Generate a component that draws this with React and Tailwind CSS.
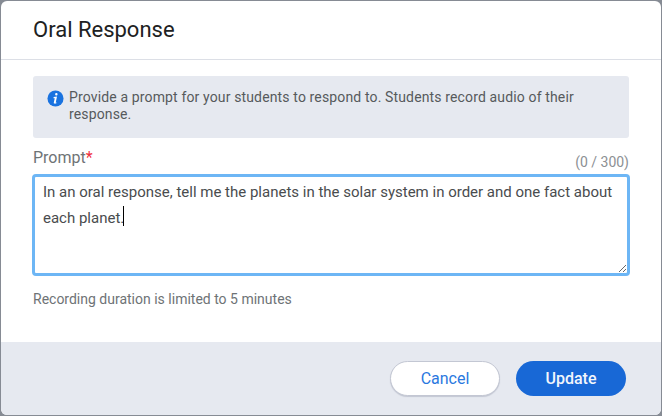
export default function App() {
  return (
    <div className="w-[662px] h-[416px] bg-[#868b94] pt-px pl-px pr-px pb-px font-['Roboto',sans-serif]">
      <div className="flex h-full flex-col overflow-hidden rounded-[6px] bg-white">
        <header className="flex h-[59px] shrink-0 items-center border-b border-[#dcdfe6] pl-[32px] pb-px">
          <h1 className="text-[22px] font-normal leading-none text-[#202122]">Oral Response</h1>
        </header>
        <main className="flex flex-1 flex-col px-[32px] pt-[16px]">
          <div className="flex h-[62px] items-start gap-[5px] rounded-[3px] bg-[#e6e9f0] px-[14px] pt-[13px]">
            <svg viewBox="0 0 18 18" className="mt-[1px] h-[17px] w-[17px] shrink-0">
              <circle cx="9" cy="9" r="8.5" fill="#1a73e0" />
              <path d="M9.9 3.2a1.3 1.3 0 1 1 -.02 2.6 1.3 1.3 0 0 1 .02-2.6zM7 7.4l3.6-.4-1.3 6.1c-.1.4.2.5.9.2l-.2.8c-1.5.6-3.1.7-2.8-.8l1-4.6-1.3.1z" fill="#fff" />
            </svg>
            <p className="text-[14px] leading-[17px] tracking-[0.14px] text-[#565a5c]">
              Provide a prompt for your students to respond to. Students record audio of their response.
            </p>
          </div>
          <div className="mt-[9px] flex h-[27px] items-start justify-between">
            <label className="mt-px text-[16px] leading-[20px] text-[#6e7376]">
              Prompt<span className="text-[#f0303c]">*</span>
            </label>
            <span className="mt-[7px] text-[14px] leading-[16px] text-[#8c9093]">(0 / 300)</span>
          </div>
          <div className="relative -mx-px h-[102px]">
            <textarea
              readOnly
              className="block h-full w-full rounded-[4px] border-[3px] border-[#6db6f5] bg-white px-[8px] py-[2px] text-[15px] leading-[26px] text-[#494c4e] outline-none"
              defaultValue="In an oral response, tell me the planets in the solar system in order and one fact about each planet."
            />
            <span className="absolute left-[91px] top-[32px] h-[20px] w-px bg-black" />
          </div>
          <p className="mt-[15px] text-[14px] leading-[16px] text-[#6e7376]">
            Recording duration is limited to 5 minutes
          </p>
        </main>
        <footer className="flex h-[73px] shrink-0 items-start justify-end gap-[16px] bg-[#e6e9f0] pr-[35px] pt-[19px]">
          <button className="h-[35px] w-[110px] rounded-full border border-[#c3c7d3] bg-white pt-px text-[16px] text-[#2a78e0] shadow-[0_1px_1px_#c3c7d3]">
            Cancel
          </button>
          <button className="h-[35px] w-[110px] rounded-full bg-[#1868d6] pt-px text-[16px] font-medium text-[#f2f6fc]">
            Update
          </button>
        </footer>
      </div>
    </div>
  );
}
